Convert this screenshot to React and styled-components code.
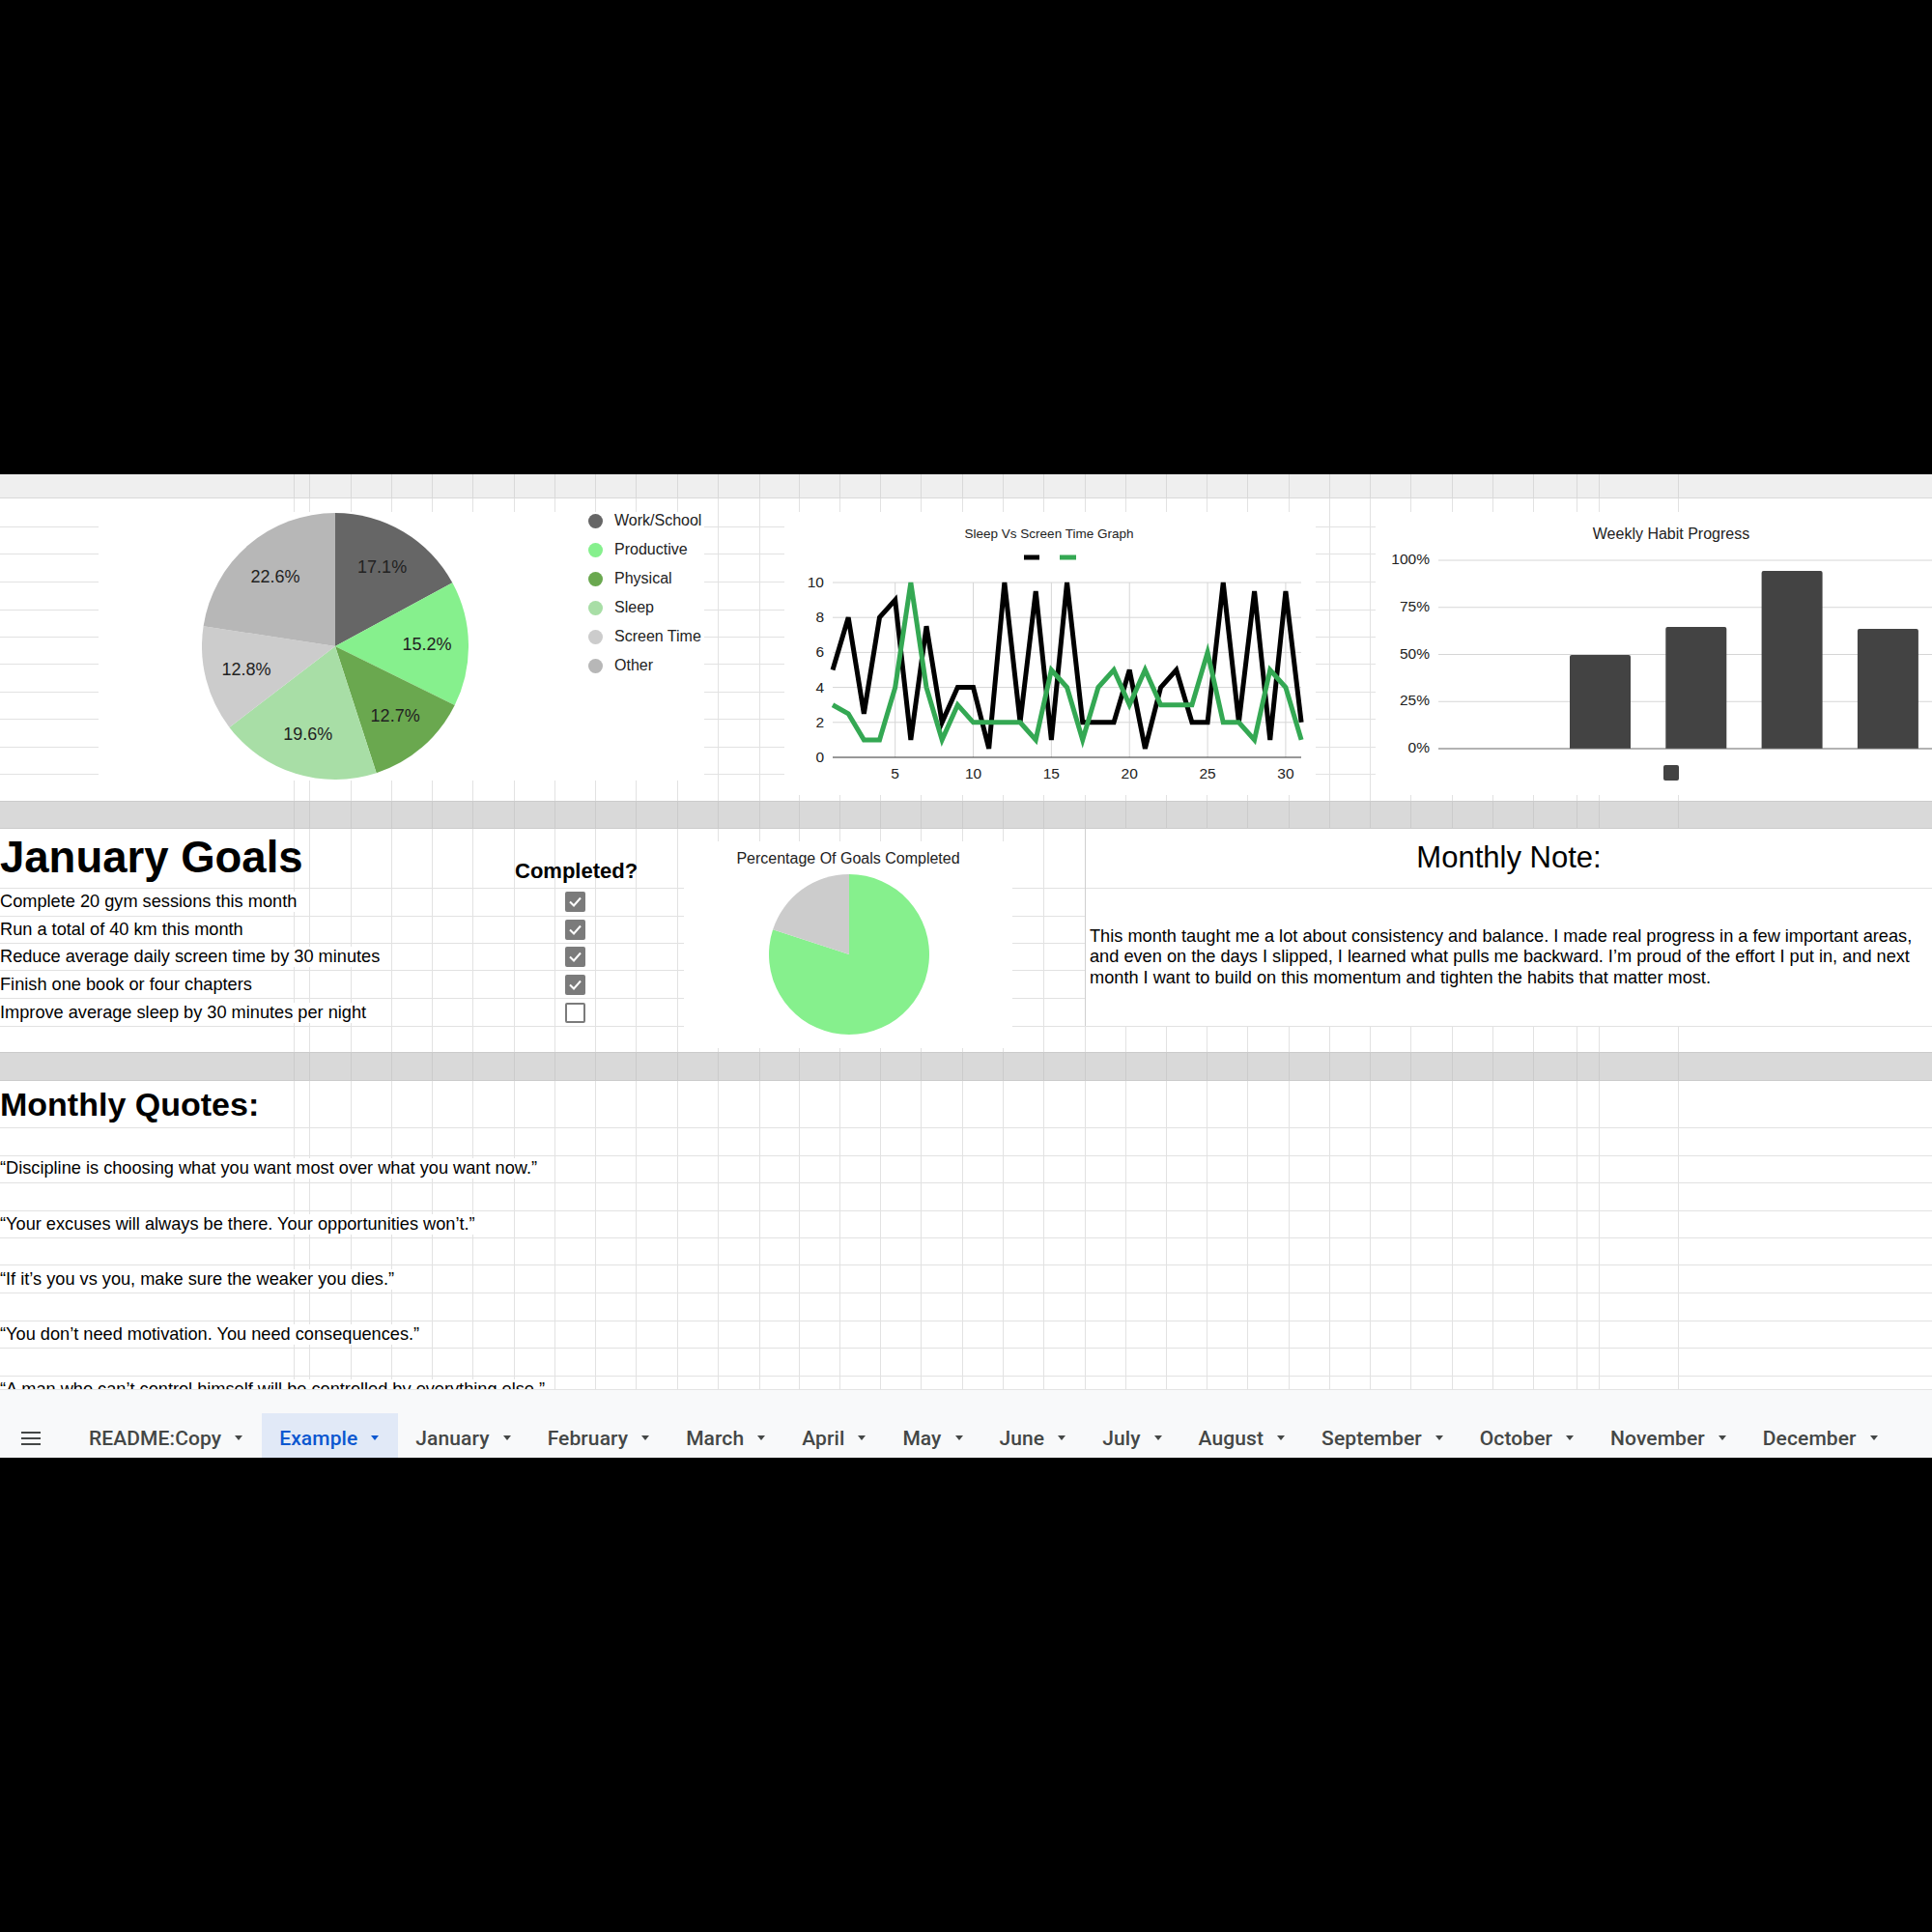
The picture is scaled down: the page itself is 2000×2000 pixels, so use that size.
import React from "react";
import styled, { createGlobalStyle } from "styled-components";

const FONT = `"Liberation Sans", Arial, sans-serif`;
const GRID = "#e2e2e2";

// column boundaries of the sheet (column A is wide, the rest ~42px)
const COLS = [
  304, 320, 363, 405, 447, 489, 532, 574, 616, 658, 701, 743, 786, 827, 869,
  911, 953, 996, 1038, 1080, 1123, 1165, 1207, 1249, 1291, 1334, 1376, 1418,
  1460, 1503, 1545, 1587, 1632, 1655, 1737,
];

const gridBg = (rows, line, bg) =>
  [
    ...rows.map(
      (y) => `linear-gradient(${line}, ${line}) 0 ${y}px / 100% 1px no-repeat`
    ),
    ...COLS.map(
      (x) => `linear-gradient(${line}, ${line}) ${x}px 0 / 1px 100% no-repeat`
    ),
    bg,
  ].join(", ");

const PIE = [
  { label: "Work/School", value: 17.1, color: "#666666" },
  { label: "Productive", value: 15.2, color: "#86f08d" },
  { label: "Physical", value: 12.7, color: "#6aa84f" },
  { label: "Sleep", value: 19.6, color: "#a8dea6" },
  { label: "Screen Time", value: 12.8, color: "#cccccc" },
  { label: "Other", value: 22.6, color: "#b7b7b7" },
];

const SCREEN = [
  5, 8, 2.5, 8, 9, 1, 7.5, 2, 4, 4, 0.5, 10, 2, 9.5, 1, 10, 2, 2, 2, 5, 0.5, 4,
  5, 2, 2, 10, 2, 9.5, 1, 9.5, 2,
];
const SLEEP = [
  3, 2.5, 1, 1, 4, 10, 4, 1, 3, 2, 2, 2, 2, 1, 5, 4, 1, 4, 5, 3, 5, 3, 3, 3, 6,
  2, 2, 1, 5, 4, 1,
];

const WEEKS = [49.7, 64.6, 94.4, 63.6];

const GOALS = [
  ["Complete 20 gym sessions this month", true],
  ["Run a total of 40 km this month", true],
  ["Reduce average daily screen time by 30 minutes", true],
  ["Finish one book or four chapters", true],
  ["Improve average sleep by 30 minutes per night", false],
];

const QUOTES = [
  "",
  "“Discipline is choosing what you want most over what you want now.”",
  "",
  "“Your excuses will always be there. Your opportunities won’t.”",
  "",
  "“If it’s you vs you, make sure the weaker you dies.”",
  "",
  "“You don’t need motivation. You need consequences.”",
  "",
  "“A man who can’t control himself will be controlled by everything else.”",
];

const TABS = [
  "README:Copy", "Example", "January", "February", "March", "April", "May",
  "June", "July", "August", "September", "October", "November", "December",
];

const GlobalStyle = createGlobalStyle`
  html, body {
    margin: 0;
    padding: 0;
    background: #000;
  }
  * {
    box-sizing: border-box;
  }
`;

const Page = styled.div`
  width: 2000px;
  font-family: ${FONT};
  color: #000;
`;

const Blackout = styled.div`
  height: 491px;
  background: #000;
`;

const Band = styled.div`
  height: ${({ $h }) => $h}px;
  overflow: hidden;
  background: ${({ $rows = [], $line = GRID, $bg = "#fff" }) =>
    gridBg($rows, $line, $bg)};
`;

/* ---------- charts row ---------- */

const ChartBand = styled(Band)`
  display: flex;
  align-items: flex-start;
  padding-top: 14px;
`;

const Card = styled.div`
  flex-shrink: 0;
  margin-left: ${({ $left }) => $left}px;
  margin-top: ${({ $top = 0 }) => $top}px;
  width: ${({ $w }) => $w}px;
  height: ${({ $h }) => $h}px;
  background: #fff;
`;

const PieCard = styled(Card)`
  display: flex;
  align-items: flex-start;
`;

const PieSvg = styled.svg`
  margin-left: 107px;
  flex-shrink: 0;
  display: block;
`;

const Legend = styled.ul`
  list-style: none;
  margin: 1px 0 0 124px;
  padding: 0;
  display: flex;
  flex-direction: column;
  gap: 14px;
`;

const LegendItem = styled.li`
  display: flex;
  align-items: center;
  gap: 12px;
  height: 16px;
  font-size: 16px;
  line-height: 16px;
  color: #222;
  white-space: nowrap;
`;

const Dot = styled.span`
  width: 15px;
  height: 15px;
  border-radius: 50%;
  background: ${({ $color }) => $color};
  flex-shrink: 0;
`;

const ChartSvg = styled.svg`
  display: block;
  font-family: ${FONT};
`;

const slicePath = (cx, cy, r, a0, a1) => {
  const p = (a) => [
    cx + r * Math.sin(a * 2 * Math.PI),
    cy - r * Math.cos(a * 2 * Math.PI),
  ];
  const [x0, y0] = p(a0);
  const [x1, y1] = p(a1);
  const large = a1 - a0 > 0.5 ? 1 : 0;
  return `M${cx} ${cy} L${x0} ${y0} A${r} ${r} 0 ${large} 1 ${x1} ${y1} Z`;
};

const TimePie = () => {
  let acc = 0;
  const cx = 138;
  const cy = 139;
  const r = 138;
  return (
    <PieSvg width="276" height="278" viewBox="0 0 276 278">
      {PIE.map((s) => {
        const a0 = acc / 100;
        acc += s.value;
        const a1 = acc / 100;
        const mid = ((a0 + a1) / 2) * 2 * Math.PI;
        return (
          <g key={s.label}>
            <path d={slicePath(cx, cy, r, a0, a1)} fill={s.color} />
            <text
              x={cx + 95 * Math.sin(mid)}
              y={cy - 95 * Math.cos(mid) + 6}
              textAnchor="middle"
              fontSize="18"
              fontFamily={FONT}
              fill="#222"
            >
              {s.value}%
            </text>
          </g>
        );
      })}
    </PieSvg>
  );
};

const dayX = (d) => 50 + (d - 1) * 16.17;
const valY = (v) => 254 - v * 18.1;
const toPoints = (arr) => arr.map((v, i) => `${dayX(i + 1)},${valY(v)}`).join(" ");

const SleepChart = () => (
  <ChartSvg width="550" height="293" viewBox="0 0 550 293">
    <text x="274" y="26.5" textAnchor="middle" fontSize="13.5" fill="#222">
      Sleep Vs Screen Time Graph
    </text>
    <rect x="248" y="44.5" width="16" height="5" fill="#000" />
    <rect x="285" y="44.5" width="17" height="5" fill="#34a853" />
    {[2, 4, 6, 8, 10].map((v) => (
      <line key={v} x1="50" x2="535" y1={valY(v)} y2={valY(v)} stroke="#d6d6d6" />
    ))}
    {[5, 10, 15, 20, 25, 30].map((d) => (
      <line key={d} x1={dayX(d)} x2={dayX(d)} y1={valY(10)} y2={valY(0)} stroke="#d6d6d6" />
    ))}
    <line x1="50" x2="535" y1={valY(0)} y2={valY(0)} stroke="#333" />
    {[0, 2, 4, 6, 8, 10].map((v) => (
      <text key={v} x="41" y={valY(v) + 5} textAnchor="end" fontSize="15.5" fill="#222">
        {v}
      </text>
    ))}
    {[5, 10, 15, 20, 25, 30].map((d) => (
      <text key={d} x={dayX(d)} y="275.5" textAnchor="middle" fontSize="15.5" fill="#222">
        {d}
      </text>
    ))}
    <polyline points={toPoints(SCREEN)} fill="none" stroke="#000" strokeWidth="5" />
    <polyline points={toPoints(SLEEP)} fill="none" stroke="#34a853" strokeWidth="5" />
  </ChartSvg>
);

const pctY = (p) => 245 - p * 1.95;

const HabitChart = () => (
  <ChartSvg width="576" height="293" viewBox="0 0 576 293">
    <text x="306" y="28" textAnchor="middle" fontSize="16" fill="#222">
      Weekly Habit Progress
    </text>
    {[25, 50, 75, 100].map((p) => (
      <line key={p} x1="65" x2="576" y1={pctY(p)} y2={pctY(p)} stroke="#d6d6d6" />
    ))}
    {[0, 25, 50, 75, 100].map((p) => (
      <text key={p} x="56" y={pctY(p) + 4} textAnchor="end" fontSize="15.5" fill="#222">
        {p}%
      </text>
    ))}
    {WEEKS.map((p, i) => {
      const x = 201 + i * 99.3;
      const top = pctY(p);
      return (
        <path
          key={i}
          d={`M${x} 245 V${top + 2} Q${x} ${top} ${x + 2} ${top} H${x + 61} Q${x + 63} ${top} ${x + 63} ${top + 2} V245 Z`}
          fill="#434343"
        />
      );
    })}
    <line x1="65" x2="576" y1="245" y2="245" stroke="#666" />
    <rect x="298" y="262" width="16" height="16" rx="2" fill="#434343" />
  </ChartSvg>
);

/* ---------- goals row ---------- */

const GoalsBand = styled(Band)`
  display: flex;
  align-items: flex-start;
`;

const GoalsTable = styled.div`
  width: 708px;
  flex-shrink: 0;
  display: flex;
  flex-direction: column;
`;

const TitleRow = styled.div`
  height: 61px;
  display: grid;
  grid-template-columns: 530px 130px;
  align-items: end;
`;

const SheetTitle = styled.h1`
  margin: 0 0 9px;
  font-size: 45.5px;
  line-height: 44px;
  font-weight: 700;
  white-space: nowrap;
`;

const ColumnHead = styled.div`
  margin-bottom: 6px;
  padding-left: 3px;
  font-size: 22px;
  line-height: 22px;
  font-weight: 700;
  text-align: center;
  white-space: nowrap;
`;

const GoalRow = styled.div`
  height: 28.6px;
  padding-top: 1px;
  display: grid;
  grid-template-columns: 530px 130px;
  align-items: center;
`;

const CellText = styled.span`
  justify-self: start;
  background: #fff;
  padding-right: 3px;
  font-size: 18.2px;
  line-height: 21px;
  white-space: nowrap;
`;

const CheckCell = styled.div`
  display: flex;
  justify-content: center;
  padding-left: 1px;
`;

const Checkbox = styled.span`
  width: 21px;
  height: 21px;
  border-radius: 2px;
  display: flex;
  align-items: center;
  justify-content: center;
  background: ${({ $checked }) => ($checked ? "#7b7b7b" : "#fff")};
  border: ${({ $checked }) => ($checked ? "none" : "2px solid #7b7b7b")};
`;

const GoalsPie = () => (
  <ChartSvg width="340" height="214" viewBox="0 0 340 214">
    <text x="170" y="23" textAnchor="middle" fontSize="16" fill="#222">
      Percentage Of Goals Completed
    </text>
    <path d={slicePath(171, 117, 83, 0, 0.8)} fill="#86f08d" />
    <path d={slicePath(171, 117, 83, 0.8, 1)} fill="#cccccc" />
  </ChartSvg>
);

const NotePanel = styled.section`
  margin-left: 75px;
  width: 877px;
  height: 204px;
  flex-shrink: 0;
  background: #fff;
  border-left: 1px solid #cfcfcf;
  display: flex;
  flex-direction: column;
`;

const NoteTitle = styled.h2`
  margin: 0;
  height: 62px;
  padding-top: 14px;
  border-bottom: 1px solid ${GRID};
  font-size: 31px;
  line-height: 31px;
  font-weight: 400;
  text-align: center;
`;

const NoteBody = styled.p`
  margin: 0;
  flex: 1;
  display: flex;
  align-items: center;
  padding: 0 8px 0 4px;
  font-size: 18.2px;
  line-height: 21.5px;
`;

/* ---------- quotes ---------- */

const QuotesBand = styled(Band)`
  display: flex;
  flex-direction: column;
`;

const QuotesTitle = styled.h2`
  margin: 0;
  height: 48px;
  padding-top: 7px;
  font-size: 34px;
  line-height: 34px;
  font-weight: 700;
  flex-shrink: 0;
`;

const QuoteRow = styled.div`
  height: 28.6px;
  flex-shrink: 0;
  display: flex;
  align-items: center;
`;

/* ---------- sheet tabs ---------- */

const TabBar = styled.nav`
  height: 71px;
  border-top: 1px solid #e3e3e3;
  background: #f8f9fa;
  display: flex;
  align-items: flex-end;
  padding-left: 22px;
  font-family: Roboto, ${FONT};
`;

const MenuIcon = styled.svg`
  display: block;
  margin-bottom: 13px;
  flex-shrink: 0;
`;

const TabList = styled.div`
  display: flex;
  margin-left: 32px;
`;

const Tab = styled.div`
  height: 46px;
  padding: 5px 20px 0 18px;
  display: flex;
  align-items: center;
  gap: 14px;
  font-size: 21px;
  letter-spacing: 0.1px;
  font-weight: 500;
  white-space: nowrap;
  color: ${({ $active }) => ($active ? "#0b57d0" : "#444746")};
  background: ${({ $active }) => ($active ? "#e1e9f7" : "transparent")};
`;

const Caret = styled.span`
  width: 0;
  height: 0;
  border-left: 4.5px solid transparent;
  border-right: 4.5px solid transparent;
  border-top: 5px solid currentColor;
`;

export default function App() {
  return (
    <Page>
      <GlobalStyle />
      <Blackout />

      <Band $h={25} $bg="#efefef" $line="#d9d9d9" $rows={[24]} />

      <ChartBand $h={313} $rows={[29, 57, 86, 115, 143, 171, 200, 228, 257, 285]}>
        <PieCard $left={102} $w={627} $h={278}>
          <TimePie />
          <Legend>
            {PIE.map((s) => (
              <LegendItem key={s.label}>
                <Dot $color={s.color} />
                {s.label}
              </LegendItem>
            ))}
          </Legend>
        </PieCard>
        <Card $left={83} $w={550} $h={293}>
          <SleepChart />
        </Card>
        <Card $left={62} $w={576} $h={293}>
          <HabitChart />
        </Card>
      </ChartBand>

      <Band $h={29} $bg="#d9d9d9" $line="#cbcbcb" $rows={[0, 28]} />

      <GoalsBand $h={231} $rows={[61, 90, 118, 146, 175, 204]}>
        <GoalsTable>
          <TitleRow>
            <SheetTitle>January Goals</SheetTitle>
            <ColumnHead>Completed?</ColumnHead>
          </TitleRow>
          {GOALS.map(([text, done]) => (
            <GoalRow key={text}>
              <CellText>{text}</CellText>
              <CheckCell>
                <Checkbox $checked={done}>
                  {done && (
                    <svg width="21" height="21" viewBox="0 0 21 21">
                      <path d="M5 10.5 L9 14.5 L16 6.5" fill="none" stroke="#fff" strokeWidth="2" />
                    </svg>
                  )}
                </Checkbox>
              </CheckCell>
            </GoalRow>
          ))}
        </GoalsTable>
        <Card $left={0} $top={13} $w={340} $h={214}>
          <GoalsPie />
        </Card>
        <NotePanel>
          <NoteTitle>Monthly Note:</NoteTitle>
          <NoteBody>
            This month taught me a lot about consistency and balance. I made real
            progress in a few important areas, and even on the days I slipped, I
            learned what pulls me backward. I’m proud of the effort I put in, and
            next month I want to build on this momentum and tighten the habits that
            matter most.
          </NoteBody>
        </NotePanel>
      </GoalsBand>

      <Band $h={30} $bg="#d9d9d9" $line="#cbcbcb" $rows={[0, 29]} />

      <QuotesBand $h={319} $rows={[48, 77, 105, 134, 162, 190, 219, 248, 276, 305]}>
        <QuotesTitle>Monthly Quotes:</QuotesTitle>
        {QUOTES.map((q, i) => (
          <QuoteRow key={i}>{q && <CellText>{q}</CellText>}</QuoteRow>
        ))}
      </QuotesBand>

      <TabBar>
        <MenuIcon width="20" height="14" viewBox="0 0 20 14">
          <rect y="0" width="20" height="2" fill="#444746" />
          <rect y="6" width="20" height="2" fill="#444746" />
          <rect y="12" width="20" height="2" fill="#444746" />
        </MenuIcon>
        <TabList>
          {TABS.map((t) => (
            <Tab key={t} $active={t === "Example"}>
              {t}
              <Caret />
            </Tab>
          ))}
        </TabList>
      </TabBar>
    </Page>
  );
}
